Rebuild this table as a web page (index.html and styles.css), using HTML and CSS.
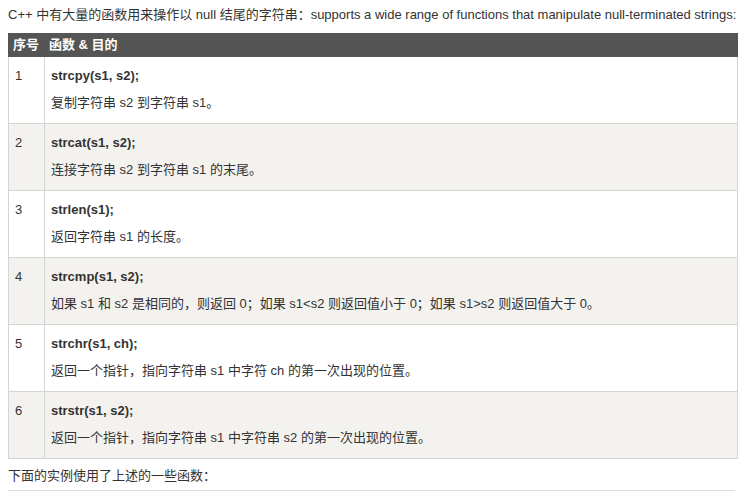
FILE: index.html
```html
<!DOCTYPE html>
<html lang="zh-CN">
<head>
  <meta charset="UTF-8">
  <meta name="viewport" content="width=device-width, initial-scale=1.0">
  <title>C++ 字符串函数</title>
  <link rel="stylesheet" href="styles.css">
</head>
<body>
  <p class="intro">C++ 中有大量的函数用来操作以 null 结尾的字符串：supports a wide range of functions that manipulate null-terminated strings:</p>
  <table class="reference">
    <thead>
      <tr>
        <th class="col-num">序号</th>
        <th>函数 &amp; 目的</th>
      </tr>
    </thead>
    <tbody>
      <tr>
        <td class="col-num">1</td>
        <td><p class="fn">strcpy(s1, s2);</p><p>复制字符串 s2 到字符串 s1。</p></td>
      </tr>
      <tr>
        <td class="col-num">2</td>
        <td><p class="fn">strcat(s1, s2);</p><p>连接字符串 s2 到字符串 s1 的末尾。</p></td>
      </tr>
      <tr>
        <td class="col-num">3</td>
        <td><p class="fn">strlen(s1);</p><p>返回字符串 s1 的长度。</p></td>
      </tr>
      <tr>
        <td class="col-num">4</td>
        <td><p class="fn">strcmp(s1, s2);</p><p>如果 s1 和 s2 是相同的，则返回 0；如果 s1&lt;s2 则返回值小于 0；如果 s1&gt;s2 则返回值大于 0。</p></td>
      </tr>
      <tr>
        <td class="col-num">5</td>
        <td><p class="fn">strchr(s1, ch);</p><p>返回一个指针，指向字符串 s1 中字符 ch 的第一次出现的位置。</p></td>
      </tr>
      <tr>
        <td class="col-num">6</td>
        <td><p class="fn">strstr(s1, s2);</p><p>返回一个指针，指向字符串 s1 中字符串 s2 的第一次出现的位置。</p></td>
      </tr>
    </tbody>
  </table>
  <p class="outro">下面的实例使用了上述的一些函数：</p>
  <div class="code-box"></div>
</body>
</html>
```

FILE: styles.css
```css
body {
  font-family: Arial, "Liberation Sans", "Noto Sans CJK SC", sans-serif;
  font-size: 13px;
  line-height: 18px;
  color: #333;
  background: #fff;
  margin: 0 2px 0 8px;
}
.intro {
  margin: 6px 0 9px;
  white-space: nowrap;
}
.reference {
  width: 730px;
  border-collapse: collapse;
  border: 1px solid #d4d4d4;
}
.reference th {
  background-color: #555;
  color: #fff;
  font-weight: bold;
  text-align: left;
  padding: 2px 4px;
  border: 1px solid #555;
}
.reference td {
  border: 1px solid #d4d4d4;
  padding: 10px 6px 11px;
  vertical-align: top;
}
.reference th.col-num,
.reference td.col-num {
  width: 23px;
}
.reference tbody tr:nth-child(even) td {
  background-color: #f3f2ef;
}
.reference td p {
  margin: 0;
}
.reference td p.fn {
  font-weight: bold;
  margin-bottom: 9px;
}
.outro {
  margin: 8px 0 5px;
}
.code-box {
  width: 726px;
  height: 10px;
  border-top: 1px solid #ddd;
  border-left: 1px solid #ddd;
}
```
